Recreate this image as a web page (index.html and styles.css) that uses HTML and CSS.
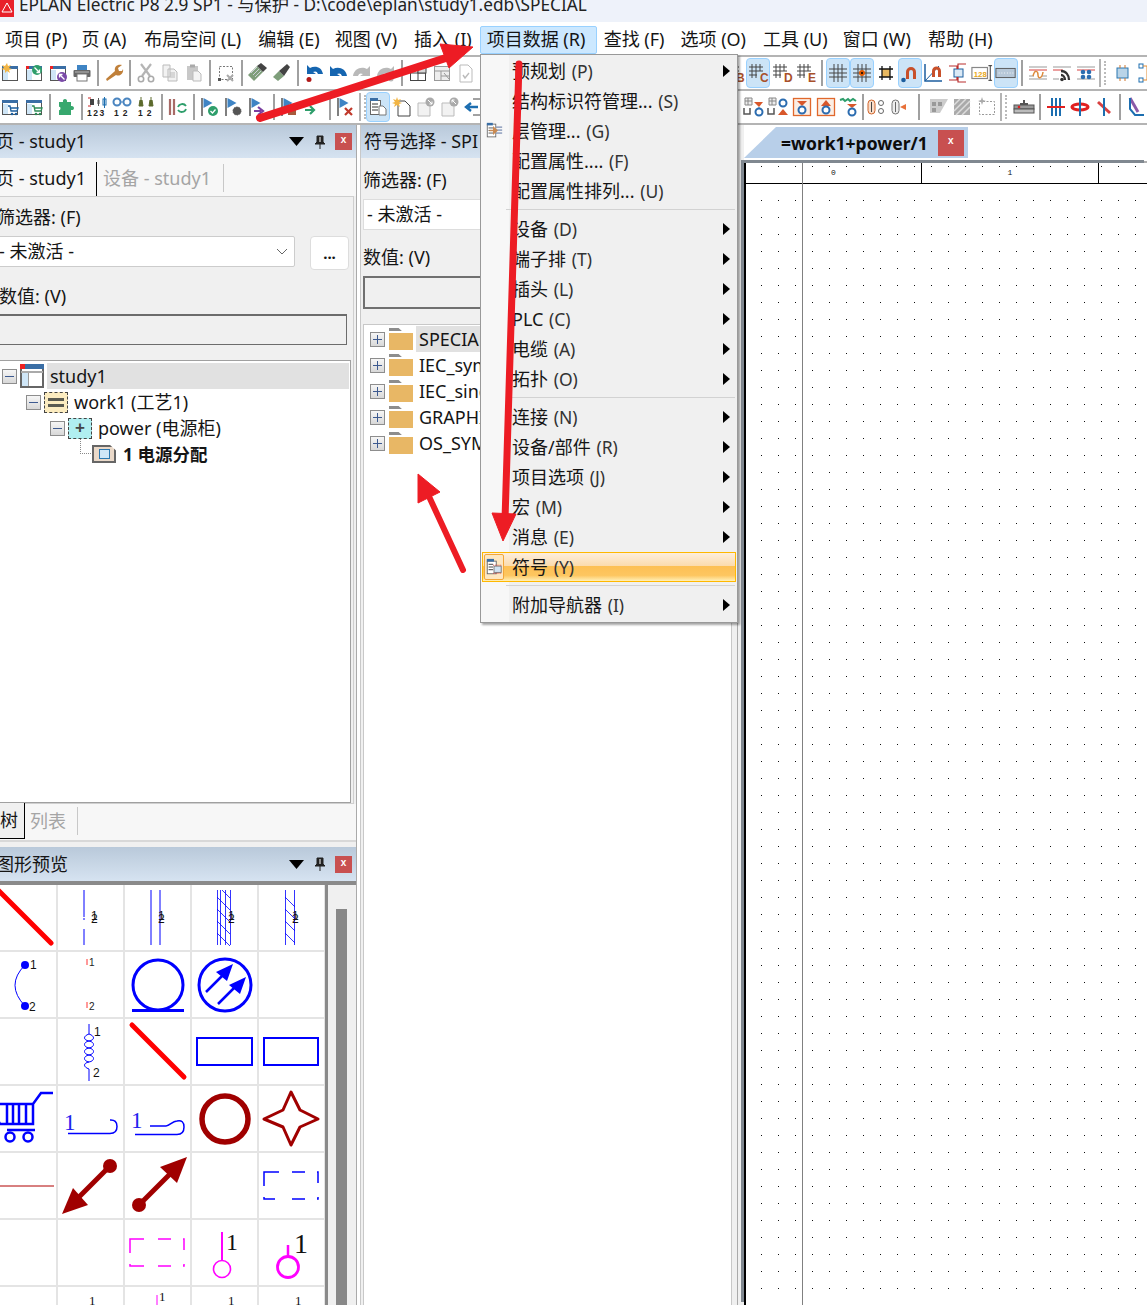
FILE: index.html
```html
<!DOCTYPE html>
<html lang="zh">
<head>
<meta charset="utf-8">
<title>EPLAN Electric P8</title>
<link rel="stylesheet" href="styles.css">
</head>
<body>
<svg class="defs" width="0" height="0" aria-hidden="true">
<defs>
<symbol id="win" viewBox="0 0 20 20"><rect x="2.500" y="3.500" width="15" height="14" fill="#fff" stroke="#555"/><rect x="2" y="3" width="16" height="3" fill="#3a6ea5"/><rect x="3" y="7" width="5" height="10" fill="#cfe6f7"/></symbol>
<symbol id="pj" viewBox="0 0 24 24"><rect x="1" y="1" width="22" height="22" fill="#fff" stroke="#666" stroke-width="2"/><rect x="0" y="0" width="24" height="5" fill="#3a6ea5"/><rect x="0" y="0" width="5" height="5" fill="#e22"/><path d="M1 8h22" stroke="#aaa" stroke-width="2"/><rect x="2" y="9" width="6" height="13" fill="#cfe6f7"/><path d="M8.500 9v13" stroke="#999"/></symbol>
<symbol id="n1" viewBox="0 0 20 20"><use href="#win"/><path d="M7 0l1 3 3-1-2 3 3 1-3 1 1 3-3-2-2 2 0-3-4-1 3-1-2-3 3 1z" fill="#f2b544"/></symbol>
<symbol id="n2" viewBox="0 0 20 20"><use href="#win"/><rect x="2" y="3" width="3" height="3" fill="#e22"/><circle cx="13" cy="7" r="5" fill="#2e9e6b"/><path d="M10.500 4.500l5 5m0-3v3h-3" stroke="#fff" fill="none" stroke-width="1.300"/></symbol>
<symbol id="n3" viewBox="0 0 20 20"><use href="#win"/><rect x="2" y="3" width="3" height="3" fill="#e22"/><circle cx="14" cy="14" r="5" fill="#7a4aa8"/><path d="M16.500 16.500l-5-5m0 3v-3h3" stroke="#fff" fill="none" stroke-width="1.300"/></symbol>
<symbol id="prt" viewBox="0 0 20 20"><rect x="5" y="2" width="10" height="6" fill="#3f84c4"/><rect x="1.500" y="7" width="17" height="7" rx="1" fill="#666"/><rect x="5" y="11" width="10" height="7" fill="#fff" stroke="#777"/><path d="M3 9h14" stroke="#bbb"/></symbol>
<symbol id="wr" viewBox="0 0 20 20"><path d="M3 18L2 16l9-8c-1-4 2-7 7-6l-4 3 1 3 3 0 1-2c1 4-3 8-7 6z" fill="#c0803a"/></symbol>
<symbol id="cut" viewBox="0 0 20 20"><path d="M5 1l9 12M15 1L6 13" stroke="#b5b5b5" stroke-width="2.200" fill="none"/><circle cx="5" cy="16" r="2.700" fill="none" stroke="#aaa" stroke-width="1.600"/><circle cx="15" cy="16" r="2.700" fill="none" stroke="#aaa" stroke-width="1.600"/></symbol>
<symbol id="cpy" viewBox="0 0 20 20"><path d="M3 2h7v12H3zM8 6h6l3 3v9H8z" fill="#f2f2f2" stroke="#bbb"/><path d="M10 10h5M10 12h5M10 14h5" stroke="#bbb"/></symbol>
<symbol id="pst" viewBox="0 0 20 20"><rect x="3" y="3" width="11" height="14" fill="#c8c8c8"/><rect x="6" y="1.500" width="5" height="3" fill="#aaa"/><path d="M9 8h5l3 3v7H9z" fill="#f4f4f4" stroke="#bbb"/></symbol>
<symbol id="sel" viewBox="0 0 20 20"><rect x="3.500" y="3.500" width="13" height="13" fill="none" stroke="#777" stroke-dasharray="2 1.500"/><rect x="2" y="15" width="3" height="3" fill="#555"/><path d="M11 12l6 6m0-6l-6 6" stroke="#aaa" stroke-width="2"/></symbol>
<symbol id="br1" viewBox="0 0 20 20"><path d="M0 12L9 3l6 6-9 9z" fill="#7e9e7a"/><path d="M9 3l4-3 6 5-4 4z" fill="#444"/><path d="M3 10l6-6M5 12l6-6M7 14l6-6" stroke="#dde" stroke-width=".8"/></symbol>
<symbol id="br2" viewBox="0 0 20 20"><path d="M1 14l6-6 5 5-6 5z" fill="#7e9e7a"/><path d="M7 8l8-7 3 3-6 9z" fill="#444"/></symbol>
<symbol id="ud" viewBox="0 0 20 20"><path d="M3 11V2l3 3c5-3 12-1 13 6h-5c-1-3-3-3-5-2l3 2z" fill="#1565b0"/><circle cx="5" cy="16.500" r="2.500" fill="#b01818"/></symbol>
<symbol id="un" viewBox="0 0 20 20"><path d="M2 13V3l3 3c5-3 13-1 14 7h-5c-1-3-3-3-5-2l3 2z" fill="#1565b0"/></symbol>
<symbol id="rd" viewBox="0 0 20 20"><path d="M18 13V3l-3 3C10 3 2 5 1 13h5c1-3 3-3 5-2l-3 2z" fill="#b9b9b9"/></symbol>
<symbol id="rd2" viewBox="0 0 20 20"><use href="#rd"/><circle cx="15" cy="16" r="2.500" fill="#b9b9b9"/><rect x="2" y="12" width="4" height="6" fill="#b9b9b9"/></symbol>
<symbol id="w1" viewBox="0 0 20 20"><rect x="2.500" y="3.500" width="15" height="14" fill="#fff" stroke="#444"/><path d="M2 10h16M10 3v15" stroke="#444"/><rect x="10" y="3" width="8" height="7" fill="#d8d8d8" stroke="#444"/></symbol>
<symbol id="w2" viewBox="0 0 20 20"><rect x="2.500" y="3.500" width="15" height="14" fill="#eee" stroke="#999"/><path d="M2 8h16M9 8v10M9 13h9M12 10l5 6" stroke="#999"/></symbol>
<symbol id="dc" viewBox="0 0 20 20"><path d="M4 2h8l4 4v13H4z" fill="#fff" stroke="#bbb"/><path d="M7 12l2 3 4-5" stroke="#bbb" fill="none" stroke-width="1.400"/></symbol>
<symbol id="gr" viewBox="0 0 20 20"><path d="M6 1v18M10 1v18M14 1v18M1 6h18M1 10h18M1 14h18" stroke="#444"/></symbol>
<symbol id="gb" viewBox="0 0 20 20"><path d="M4 1v14M8 1v14M12 1v7M1 4h14M1 8h14M1 12h8" stroke="#444"/></symbol>
<symbol id="gs" viewBox="0 0 20 20"><use href="#gr"/><circle cx="10" cy="10" r="3" fill="#e25a00"/><circle cx="10" cy="10" r="1" fill="#000"/></symbol>
<symbol id="sq" viewBox="0 0 20 20"><rect x="6" y="6" width="8" height="8" fill="#e8b860"/><path d="M6 3v14M14 3v14M3 6h14M3 14h14" stroke="#111" stroke-width="1.300"/></symbol>
<symbol id="mg" viewBox="0 0 20 20"><path d="M6 16V9a5 5 0 0 1 10 0v7h-3V9a2 2 0 0 0-4 0v7z" fill="#c8502a"/><circle cx="3.500" cy="17" r="2.300" fill="#1c5e9e"/></symbol>
<symbol id="mg2" viewBox="0 0 20 20"><path d="M1 1v17h17" fill="none" stroke="#1c5e9e" stroke-width="1.500"/><path d="M1 18L15 3" stroke="#1c5e9e"/><path d="M8 14V8a4.500 4.500 0 0 1 9 0v6h-3V8a1.500 1.500 0 0 0-3 0v6z" fill="#c8502a"/></symbol>
<symbol id="rl" viewBox="0 0 20 20"><rect x="6" y="6" width="9" height="8" fill="#dbe9f5" stroke="#1c5e9e"/><path d="M1 3h8v3M1 17h8v-3M10 6V1h8M10 14v5h8" stroke="#b92e2e" fill="none" stroke-width="1.200"/></symbol>
<symbol id="n128" viewBox="0 0 24 20"><rect x="1" y="4" width="17" height="12" fill="#fff" stroke="#888" stroke-width="1.300"/><text x="3" y="14" font-size="8.500" font-weight="700" fill="#e9a820" font-family="Liberation Sans">128</text><path d="M21 2v16M19 2h4M19 18h4" stroke="#222"/></symbol>
<symbol id="rlr" viewBox="0 0 24 20"><rect x="1" y="5" width="21" height="10" fill="#b7c8d8" stroke="#555"/><path d="M4 10h16" stroke="#fff" stroke-dasharray="1 2"/></symbol>
<symbol id="tl" viewBox="0 0 20 20"><path d="M1 4h18M1 16h18" stroke="#999"/><path d="M1 7h18" stroke="#d84040"/><path d="M1 13h5M14 13h5" stroke="#999"/><path d="M5 13c2-7 5-5 5-1s4 4 5-3" fill="none" stroke="#dd8a3c" stroke-width="1.500"/></symbol>
<symbol id="tw" viewBox="0 0 20 20"><path d="M1 4h18M1 16h6" stroke="#999"/><path d="M1 7h10" stroke="#d84040"/><path d="M9 8c5 0 8 4 8 9M9 12c2 0 4 2 4 5" fill="none" stroke="#333" stroke-width="2.300"/><circle cx="10" cy="16.500" r="1.800" fill="#333"/></symbol>
<symbol id="td" viewBox="0 0 20 20"><path d="M1 4h18M1 16h18" stroke="#999"/><path d="M1 7h18" stroke="#d84040"/><g fill="#2b6cb0"><circle cx="7" cy="9" r="2.300"/><circle cx="13" cy="9" r="2.300"/><circle cx="7" cy="14" r="2.300"/><circle cx="13" cy="14" r="2.300"/></g></symbol>
<symbol id="ch" viewBox="0 0 20 20"><rect x="4" y="5" width="11" height="10" fill="#b9d4e8" stroke="#2b77b0"/><path d="M7 2v3M12 2v3M7 15v3M12 15v3" stroke="#d0762d"/></symbol>
<symbol id="tr" viewBox="0 0 20 20"><rect x="2" y="1" width="4" height="4" fill="#fff" stroke="#1c6eb0"/><rect x="2" y="15" width="4" height="4" fill="#fff" stroke="#1c6eb0"/><rect x="13" y="7" width="5" height="5" fill="#cfe" stroke="#1c6eb0"/><path d="M6 3h4v14H6M10 9h3" fill="none" stroke="#e08a30"/></symbol>
<symbol id="wc1" viewBox="0 0 20 20"><use href="#win"/><path d="M8 9h2l1 5h6l1-3h-8" fill="#fff" stroke="#1d5f9e" stroke-width="1.300"/><circle cx="12" cy="17" r="1.300" fill="#1d5f9e"/><circle cx="16" cy="17" r="1.300" fill="#1d5f9e"/></symbol>
<symbol id="wc2" viewBox="0 0 20 20"><use href="#win"/><path d="M8 9h2l1 5h6l1-3h-8" fill="#fff" stroke="#2e8b57" stroke-width="1.300"/><circle cx="12" cy="17" r="1.300" fill="#2e8b57"/><circle cx="16" cy="17" r="1.300" fill="#2e8b57"/></symbol>
<symbol id="pz" viewBox="0 0 20 20"><path d="M3 5h4c-1-4 5-4 4 0h4v4c4-1 4 5 0 4v5H3v-5c2 1 2-4 0-3z" fill="#37a86e"/></symbol>
<symbol id="n123" viewBox="0 0 22 20"><rect x="3" y="2" width="4" height="6" fill="#444"/><path d="M1 1h3M1 9h3" stroke="#c22"/><path d="M10 4h3M10 6h3M11.500 1v8" stroke="#555"/><rect x="16" y="2" width="3" height="6" fill="#fff" stroke="#1c6eb0"/><path d="M17.500 0v11" stroke="#1c6eb0"/><text x="0" y="19" font-size="8.500" font-weight="700" letter-spacing="1.500" font-family="Liberation Sans" fill="#222">123</text></symbol>
<symbol id="n12b" viewBox="0 0 20 20"><circle cx="5" cy="5" r="3.500" fill="none" stroke="#4a85c0" stroke-width="2"/><circle cx="15" cy="5" r="3.500" fill="none" stroke="#4a85c0" stroke-width="2"/><path d="M8 5h4" stroke="#4a85c0"/><text x="2" y="19" font-size="8.500" font-weight="700" letter-spacing="4" font-family="Liberation Sans" fill="#222">12</text></symbol>
<symbol id="n12o" viewBox="0 0 20 20"><path d="M5 0v2M3 9l1-6h2l1 6zM15 0v2M13 9l1-6h2l1 6z" fill="#5d6a2c" stroke="#5d6a2c"/><text x="2" y="19" font-size="8.500" font-weight="700" letter-spacing="4" font-family="Liberation Sans" fill="#222">12</text></symbol>
<symbol id="brf" viewBox="0 0 20 20"><path d="M2 2v16M6 2v16" stroke="#a86a66" stroke-width="2.200"/><path d="M18 9a4.500 4.500 0 0 0-8 1M10 13a4.500 4.500 0 0 0 8-1" fill="none" stroke="#2e9e6b" stroke-width="1.800"/></symbol>
<symbol id="flag" viewBox="0 0 20 20"><path d="M2 1v18" stroke="#555" stroke-width="1.500"/><path d="M3.500 1l9 5-9 5z" fill="#3f84c4"/></symbol>
<symbol id="f1" viewBox="0 0 20 20"><use href="#flag"/><circle cx="13" cy="14" r="5" fill="#2e9e6b"/><path d="M10.500 14l2 2 3-3.500" stroke="#fff" fill="none" stroke-width="1.300"/></symbol>
<symbol id="f2" viewBox="0 0 20 20"><use href="#flag"/><circle cx="13" cy="14" r="4" fill="#555" stroke="#555" stroke-dasharray="1.500 1"/></symbol>
<symbol id="f3" viewBox="0 0 20 20"><use href="#flag"/><path d="M6 14h7M10 10l5 4-5 4" stroke="#7a3fa0" stroke-width="2.200" fill="none"/></symbol>
<symbol id="f4" viewBox="0 0 20 20"><use href="#flag"/><rect x="8" y="10" width="8" height="8" fill="#a85a3c"/></symbol>
<symbol id="f5" viewBox="0 0 20 20"><path d="M14 6l-9 0 9-5z" fill="#3f84c4"/><path d="M1 13h8M6 9l4 4-4 4" stroke="#2e9e6b" stroke-width="2.200" fill="none"/></symbol>
<symbol id="f6" viewBox="0 0 20 20"><use href="#flag"/><path d="M9 11l7 7m0-7l-7 7" stroke="#c0392b" stroke-width="2.200"/></symbol>
<symbol id="ds" viewBox="0 0 20 20"><rect x="2.500" y="3.500" width="10" height="14" fill="#fff" stroke="#666"/><rect x="2" y="1" width="8" height="3" fill="#3a6ea5"/><path d="M4 7h6M4 10h6M4 13h6" stroke="#333"/><path d="M11 9h4l3 3v6h-7z" fill="#fff" stroke="#777"/></symbol>
<symbol id="ds2" viewBox="0 0 20 20"><rect x="2.500" y="3.500" width="10" height="14" fill="#fff" stroke="#666"/><rect x="2" y="1" width="8" height="3" fill="#3a6ea5"/><path d="M4 7h5M4 10h5M4 13h5" stroke="#333"/><rect x="10" y="9" width="8" height="7" fill="#cfe2f2" stroke="#777"/><path d="M9 8h10M9 17h10" stroke="#d44" stroke-dasharray="1 1"/></symbol>
<symbol id="ds3" viewBox="0 0 20 20"><rect x="1.500" y="2.500" width="10" height="15" fill="#fff" stroke="#666"/><rect x="1" y="1" width="7" height="3" fill="#3a6ea5"/><path d="M3 7h6M3 10h3M3 13h6" stroke="#444"/><path d="M12 6h7M12 9.500h7M12 13h7" stroke="#3d5a90"/><path d="M4 10h8M9 6.500l4 3.500-4 3.500z" fill="#c98a52" stroke="#c98a52" stroke-width="1.500"/></symbol>
<symbol id="dstar" viewBox="0 0 20 20"><path d="M6 4h7l5 5v10H6z" fill="#fff" stroke="#444"/><path d="M5 0l1 3 3-1-2 3 3 1-3 1 1 3-3-2-3 2 1-3-3-1 3-1-2-3 3 1z" fill="#f2b544"/></symbol>
<symbol id="dg1" viewBox="0 0 20 20"><path d="M2 6h12v13H2z" fill="#f2f2f2" stroke="#bbb"/><circle cx="14" cy="5" r="4.500" fill="#aaa"/><path d="M12 3l4 4m0-2.500V7h-2.500" stroke="#fff" fill="none"/></symbol>
<symbol id="dg2" viewBox="0 0 20 20"><path d="M2 6h12v13H2z" fill="#f2f2f2" stroke="#bbb"/><circle cx="14" cy="5" r="4.500" fill="#aaa"/><path d="M16 7l-4-4m0 2.500V3h2.500" stroke="#fff" fill="none"/></symbol>
<symbol id="back" viewBox="0 0 20 20"><path d="M9 2h9v16H9" fill="#fff" stroke="#444"/><path d="M14 10H4M7 6l-5 4 5 4" stroke="#1c6eb0" stroke-width="2.400" fill="none"/></symbol>
<symbol id="pu1" viewBox="0 0 22 20"><path d="M2 1h7v7H2z" fill="#eee" stroke="#888"/><path d="M2 4h7M5 1v7" stroke="#888"/><path d="M11 5h9l-4 5z" fill="#d8572a"/><path d="M1 11v6h6v-6" fill="none" stroke="#555" stroke-width="1.500"/><circle cx="16" cy="15" r="3.500" fill="#fff" stroke="#2b6cb0" stroke-width="2"/><path d="M16 10v2" stroke="#2b6cb0"/></symbol>
<symbol id="pu2" viewBox="0 0 22 20"><path d="M2 1h7v7H2z" fill="#eee" stroke="#888"/><path d="M2 4h7M5 1v7" stroke="#888"/><path d="M1 11v6h6v-6" fill="none" stroke="#555" stroke-width="1.500"/><circle cx="16" cy="6" r="3.500" fill="#fff" stroke="#2b6cb0" stroke-width="2"/><path d="M11 18h10l-5-6z" fill="#d8572a"/></symbol>
<symbol id="pu3" viewBox="0 0 20 20"><rect x="1.500" y="1.500" width="17" height="17" fill="#fbeee4" stroke="#e0682c" stroke-width="1.300"/><path d="M5 4h10l-5 5z" fill="#d8572a"/><circle cx="10" cy="13" r="3.500" fill="#fff" stroke="#2b6cb0" stroke-width="2"/></symbol>
<symbol id="pu4" viewBox="0 0 20 20"><rect x="1.500" y="1.500" width="17" height="17" fill="#fbeee4" stroke="#e0682c" stroke-width="1.300"/><path d="M5 9h10l-5-6z" fill="#d8572a"/><circle cx="10" cy="13" r="3.500" fill="#fff" stroke="#2b6cb0" stroke-width="2"/></symbol>
<symbol id="pu5" viewBox="0 0 22 20"><path d="M1 3l3-1 2 2 3-2 2 2 3-2 3 2" fill="none" stroke="#2e9e6b" stroke-width="2"/><path d="M8 7h10l-5 4z" fill="#d8572a"/><circle cx="13" cy="15" r="3.500" fill="#fff" stroke="#2b6cb0" stroke-width="2"/></symbol>
<symbol id="cy1" viewBox="0 0 22 20"><rect x="3" y="3" width="7" height="14" rx="3.500" fill="#f9ddc9" stroke="#d0642a"/><path d="M6.500 5v10" stroke="#444"/><circle cx="16" cy="6" r="2.500" fill="none" stroke="#666"/><circle cx="16" cy="14" r="2.500" fill="none" stroke="#666"/></symbol>
<symbol id="cy2" viewBox="0 0 22 20"><rect x="3" y="3" width="7" height="14" rx="3.500" fill="#eee" stroke="#777"/><path d="M6.500 5v10" stroke="#666"/><path d="M11 10l6-3v6z" fill="#e8713a"/></symbol>
<symbol id="gy1" viewBox="0 0 22 20"><path d="M2 2h18l-8 14H2z" fill="#ccc"/><path d="M4 5h4v4H4zM10 5h4v4h-4zM4 11h4v4H4z" fill="#999"/></symbol>
<symbol id="gy2" viewBox="0 0 22 20"><rect x="2" y="2" width="16" height="16" fill="#aaa"/><path d="M2 8l6-6M2 14L14 2M4 18L18 4M10 18l8-8" stroke="#ddd" stroke-width="1.500"/></symbol>
<symbol id="gy3" viewBox="0 0 22 20"><rect x="3.500" y="4.500" width="15" height="13" fill="none" stroke="#999" stroke-dasharray="2 1.500"/><path d="M6 0l1 3 3 1-3 1-1 3-1-3-3-1 3-1z" fill="#aaa"/></symbol>
<symbol id="st" viewBox="0 0 22 20"><path d="M7 7h8M11 3v4" stroke="#555" stroke-width="2"/><rect x="1" y="8" width="20" height="4" fill="#999" stroke="#555"/><rect x="1" y="12" width="20" height="4" fill="#bbb" stroke="#555"/><circle cx="6" cy="10" r="1.300" fill="#d22"/></symbol>
<symbol id="cb1" viewBox="0 0 20 20"><path d="M6 1v18M10 1v18M14 1v18" stroke="#1c6eb0" stroke-width="2"/><path d="M1 10h18" stroke="#e02020" stroke-width="2"/></symbol>
<symbol id="cb2" viewBox="0 0 20 20"><ellipse cx="10" cy="10" rx="8" ry="3" fill="none" stroke="#e02020" stroke-width="3"/><path d="M10 1v18" stroke="#1c6eb0" stroke-width="2"/></symbol>
<symbol id="cb3" viewBox="0 0 20 20"><path d="M4 5l12 11" stroke="#d84040" stroke-width="3"/><path d="M10 1v18" stroke="#1c6eb0" stroke-width="2"/></symbol>
<symbol id="cb4" viewBox="0 0 20 20"><path d="M4 1l8 14" stroke="#8a5aa8" stroke-width="3"/><path d="M4 1v11l5 6h9" fill="none" stroke="#1c6eb0" stroke-width="2"/></symbol>
<symbol id="dn" viewBox="0 0 15 9"><path d="M0 0h15L7.500 9z" fill="#000"/></symbol>
<symbol id="pin" viewBox="0 0 12 14"><path d="M3 1h6v6l2 2H1l2-2zM6 9v5" fill="#222" stroke="#222"/><path d="M6 2v5" stroke="#fff"/></symbol>
</defs>
</svg>

<div class="app">
<header class="title"><span class="logo"><svg viewBox="0 0 14 16" width="14" height="16"><path d="M7 4l5 9H2z" fill="none" stroke="#fff"/></svg></span><span class="title-text">EPLAN Electric P8 2.9 SP1 - 与保护 - D:\code\eplan\study1.edb\SPECIAL</span></header>

<nav class="menubar">
<span class="mi m1">项目 (P)</span><span class="mi m2">页 (A)</span><span class="mi m3">布局空间 (L)</span><span class="mi m4">编辑 (E)</span><span class="mi m5">视图 (V)</span><span class="mi m6">插入 (I)</span><span class="mi mactive">项目数据 (R)</span><span class="mi m8">查找 (F)</span><span class="mi m9">选项 (O)</span><span class="mi m10">工具 (U)</span><span class="mi m11">窗口 (W)</span><span class="mi m12">帮助 (H)</span>
</nav>

<div class="tb tb1">
<i class="ti"><svg><use href="#n1"/></svg></i><i class="ti"><svg><use href="#n2"/></svg></i><i class="ti"><svg><use href="#n3"/></svg></i><i class="ti"><svg><use href="#prt"/></svg></i><b class="sep"></b>
<i class="ti"><svg><use href="#wr"/></svg></i><b class="sep"></b>
<i class="ti"><svg><use href="#cut"/></svg></i><i class="ti"><svg><use href="#cpy"/></svg></i><i class="ti"><svg><use href="#pst"/></svg></i><b class="sep"></b>
<i class="ti"><svg><use href="#sel"/></svg></i><b class="sep"></b>
<i class="ti"><svg><use href="#br1"/></svg></i><i class="ti"><svg><use href="#br2"/></svg></i><b class="sep"></b>
<i class="ti"><svg><use href="#ud"/></svg></i><i class="ti"><svg><use href="#un"/></svg></i><i class="ti"><svg><use href="#rd"/></svg></i><i class="ti"><svg><use href="#rd2"/></svg></i><b class="sep"></b>
<i class="ti"><svg><use href="#w1"/></svg></i><i class="ti"><svg><use href="#w2"/></svg></i><i class="ti"><svg><use href="#dc"/></svg></i>
<div class="tb-right r1">
<i class="ti"><svg><use href="#gb"/><text x="12" y="19" class="gl">B</text></svg></i><i class="ti on"><svg><use href="#gb"/><text x="12" y="19" class="gl">C</text></svg></i><i class="ti"><svg><use href="#gb"/><text x="12" y="19" class="gl">D</text></svg></i><i class="ti"><svg><use href="#gb"/><text x="12" y="19" class="gl">E</text></svg></i><b class="sep"></b>
<i class="ti on"><svg><use href="#gr"/></svg></i><i class="ti on"><svg><use href="#gs"/></svg></i><i class="ti"><svg><use href="#sq"/></svg></i><i class="ti on"><svg><use href="#mg"/></svg></i><i class="ti"><svg><use href="#mg2"/></svg></i><i class="ti"><svg><use href="#rl"/></svg></i><i class="ti"><svg class="wide"><use href="#n128"/></svg></i><i class="ti on"><svg class="wide"><use href="#rlr"/></svg></i><b class="sep"></b>
<i class="ti"><svg><use href="#tl"/></svg></i><i class="ti"><svg><use href="#tw"/></svg></i><i class="ti"><svg><use href="#td"/></svg></i><b class="sep dots dw"></b>
<i class="ti"><svg><use href="#ch"/></svg></i><i class="ti"><svg><use href="#tr"/></svg></i>
</div>
</div>

<div class="tb tb2">
<i class="ti"><svg><use href="#wc1"/></svg></i><i class="ti"><svg><use href="#wc2"/></svg></i><b class="sep"></b>
<i class="ti"><svg><use href="#pz"/></svg></i><b class="sep"></b>
<i class="ti"><svg class="wide"><use href="#n123"/></svg></i><i class="ti"><svg><use href="#n12b"/></svg></i><i class="ti"><svg><use href="#n12o"/></svg></i><b class="sep"></b>
<i class="ti"><svg><use href="#brf"/></svg></i><b class="sep"></b>
<i class="ti"><svg><use href="#f1"/></svg></i><i class="ti"><svg><use href="#f2"/></svg></i><i class="ti"><svg><use href="#f3"/></svg></i><b class="sep"></b>
<i class="ti"><svg><use href="#f4"/></svg></i><i class="ti"><svg><use href="#f5"/></svg></i><b class="sep"></b>
<i class="ti"><svg><use href="#f6"/></svg></i><b class="sep dots"></b>
<i class="ti on"><svg><use href="#ds"/></svg></i><i class="ti"><svg><use href="#dstar"/></svg></i><i class="ti"><svg><use href="#dg1"/></svg></i><i class="ti"><svg><use href="#dg2"/></svg></i><i class="ti"><svg><use href="#back"/></svg></i>
<div class="tb-right r2">
<i class="ti"><svg class="wide"><use href="#pu1"/></svg></i><i class="ti"><svg class="wide"><use href="#pu2"/></svg></i><i class="ti"><svg><use href="#pu3"/></svg></i><i class="ti"><svg><use href="#pu4"/></svg></i><i class="ti"><svg class="wide"><use href="#pu5"/></svg></i><b class="sep sn"></b>
<i class="ti"><svg class="wide"><use href="#cy1"/></svg></i><i class="ti"><svg class="wide"><use href="#cy2"/></svg></i><b class="sep sw"></b>
<i class="ti"><svg class="wide"><use href="#gy1"/></svg></i><i class="ti"><svg class="wide"><use href="#gy2"/></svg></i><i class="ti"><svg class="wide"><use href="#gy3"/></svg></i><b class="sep dots dw"></b>
<i class="ti"><svg class="wide"><use href="#st"/></svg></i><b class="sep"></b>
<i class="ti"><svg><use href="#cb1"/></svg></i><i class="ti"><svg><use href="#cb2"/></svg></i><i class="ti"><svg><use href="#cb3"/></svg></i><b class="sep"></b>
<i class="ti"><svg><use href="#cb4"/></svg></i>
</div>
</div>

<main class="work">
<section class="left">
  <div class="ph"><span class="ph-t">页 - study1</span><span class="ph-c"><svg class="c-dn"><use href="#dn"/></svg><svg class="c-pin"><use href="#pin"/></svg><span class="c-x">x</span></span></div>
  <div class="tabs">
    <span class="tab act">页 - study1</span><span class="tab dim">设备 - study1</span>
  </div>
  <div class="lbody">
    <div class="lbl l-f">筛选器: (F)</div>
    <div class="frow">
      <div class="sel">- 未激活 -<svg class="chev" viewBox="0 0 12 8" width="12" height="8"><path d="M1 1l5 5 5-5" fill="none" stroke="#666"/></svg></div>
      <div class="dots-btn">...</div>
    </div>
    <div class="lbl l-v">数值: (V)</div>
    <div class="val"></div>
    <div class="tree">
      <div class="row r0"><span class="exp"></span><svg class="node"><use href="#pj"/></svg><span class="t seltext">study1</span></div>
      <div class="row r1x"><span class="exp"></span><span class="node nwork"><b></b><b></b></span><span class="t">work1 (工艺1)</span></div>
      <div class="row r2x"><span class="exp"></span><span class="node npower">+</span><span class="t">power (电源柜)</span></div>
      <div class="row r3x"><span class="stub"></span><span class="node npage"><em></em></span><span class="t bold">1 电源分配</span></div>
    </div>
  </div>
  <div class="btabs"><span class="btab act">树</span><span class="btab dim">列表</span></div>
  <div class="ph ph2"><span class="ph-t">图形预览</span><span class="ph-c"><svg class="c-dn"><use href="#dn"/></svg><svg class="c-pin"><use href="#pin"/></svg><span class="c-x">x</span></span></div>
  <div class="preview">
    <div class="grid">
      <svg class="cell" viewBox="0 0 65 65"><path d="M4 2L60 58" stroke="#f00" stroke-width="5" stroke-linecap="round"/></svg>
      <svg class="cell" viewBox="0 0 65 65"><path d="M26 5v27M26 33v2M26 44v16" stroke="#00f"/><text x="33" y="35" class="s11">1</text><text x="33" y="38" class="s11">2</text></svg>
      <svg class="cell" viewBox="0 0 65 65"><path d="M26 5v55M35 5v55" stroke="#00f"/><text x="33" y="35" class="s11">1</text><text x="33" y="38" class="s11">2</text></svg>
      <svg class="cell" viewBox="0 0 65 65"><path d="M25.500 5v55M28.500 5v55M33.500 5v55M38.500 5v55M25 12l13 13M25 24l13 13M25 36l13 13M25 48l13 13M30 5l8 8" stroke="#00f" stroke-width=".8"/><text x="36" y="35" class="s11">1</text><text x="36" y="38" class="s11">2</text></svg>
      <svg class="cell" viewBox="0 0 65 65"><path d="M26.500 5v55M35.500 5v55M26 12l10 10M26 24l10 10M26 36l10 10M26 48l10 10" stroke="#00f" stroke-width=".8"/><text x="33" y="35" class="s11">1</text><text x="33" y="38" class="s11">2</text></svg>

      <svg class="cell" viewBox="0 0 65 65"><path d="M34 13Q14 33 34 54" fill="none" stroke="#00f"/><circle cx="34" cy="13" r="4" fill="#00f"/><circle cx="34" cy="54" r="4" fill="#00f"/><text x="39" y="17" class="s11">1</text><text x="38" y="59" class="s11">2</text></svg>
      <svg class="cell" viewBox="0 0 65 65"><path d="M29 7v6M29 50v6" stroke="#f33"/><text x="31" y="14" class="s10">1</text><text x="31" y="58" class="s10">2</text></svg>
      <svg class="cell" viewBox="0 0 65 65"><circle cx="33" cy="33" r="25" fill="none" stroke="#00f" stroke-width="3"/><path d="M7 58.500h52" stroke="#00f" stroke-width="3"/></svg>
      <svg class="cell" viewBox="0 0 65 65"><circle cx="33" cy="33" r="26" fill="none" stroke="#00f" stroke-width="3"/><path d="M14 40L32 22M26 52L44 34" stroke="#00f" stroke-width="2.500"/><path d="M41 12L35 29 24 20zM54 25L48 42 37 33z" fill="#00f"/></svg>
      <svg class="cell" viewBox="0 0 65 65"></svg>

      <svg class="cell" viewBox="0 0 65 65"></svg>
      <svg class="cell" viewBox="0 0 65 65"><path d="M31 5v10c-6 2-6 6 0 7 6 1 6 6 0 7 6 1 6 6 0 7 6 1 6 6 0 7-6 1-6 5 0 7v12" fill="none" stroke="#00f"/><path d="M31 15c6 2 6 6 0 7-6 1-6 6 0 7-6 1-6 6 0 7-6 1-6 6 0 7" fill="none" stroke="#00f"/><text x="36" y="17" class="s11">1</text><text x="35" y="58" class="s11">2</text></svg>
      <svg class="cell" viewBox="0 0 65 65"><path d="M7 6L59 58" stroke="#f00" stroke-width="5" stroke-linecap="round"/></svg>
      <svg class="cell" viewBox="0 0 65 65"><rect x="5" y="19" width="55" height="27" fill="none" stroke="#00f" stroke-width="2"/></svg>
      <svg class="cell" viewBox="0 0 65 65"><rect x="5" y="19" width="54" height="27" fill="none" stroke="#00f" stroke-width="2"/></svg>

      <svg class="cell" viewBox="0 0 65 65"><path d="M2 18h40v20H9L5 30M16 18v20M22 18v20M28 18v20M35 18v20M42 18l8-11h12M16 44h28" fill="none" stroke="#00f" stroke-width="2.500"/><circle cx="19" cy="51" r="4.500" fill="none" stroke="#00f" stroke-width="2.500"/><circle cx="37" cy="51" r="4.500" fill="none" stroke="#00f" stroke-width="2.500"/></svg>
      <svg class="cell" viewBox="0 0 65 65"><text x="6" y="44" class="sb">1</text><path d="M10 47.500H52Q59 47.500 59 40.500T52 34" fill="none" stroke="#00f" stroke-width="1.500"/></svg>
      <svg class="cell" viewBox="0 0 65 65"><text x="6" y="42" class="sb">1</text><path d="M10 48.500H52Q59 48.500 59 41T52 35C47 35 45 40 41 40H25" fill="none" stroke="#00f" stroke-width="1.500"/></svg>
      <svg class="cell" viewBox="0 0 65 65"><circle cx="33" cy="33" r="23" fill="none" stroke="#a00000" stroke-width="5.500"/></svg>
      <svg class="cell" viewBox="0 0 65 65"><path d="M32 6L41 24 59 33 41 41 32 59 24 41 5 33 24 24z" fill="none" stroke="#a00000" stroke-width="3" stroke-linejoin="round"/></svg>

      <svg class="cell" viewBox="0 0 65 65"><path d="M0 33h63" stroke="#b00000"/></svg>
      <svg class="cell" viewBox="0 0 65 65"><circle cx="52" cy="13" r="7" fill="#a00000"/><path d="M52 13L20 45" stroke="#a00000" stroke-width="5"/><path d="M4 61L15 35 30 52z" fill="#a00000"/></svg>
      <svg class="cell" viewBox="0 0 65 65"><circle cx="14" cy="52" r="7" fill="#a00000"/><path d="M14 52L45 21" stroke="#a00000" stroke-width="5"/><path d="M62 4L35 14 52 30z" fill="#a00000"/></svg>
      <svg class="cell" viewBox="0 0 65 65"></svg>
      <svg class="cell" viewBox="0 0 65 65"><path d="M20 19H5V33M33 19H46M58 19h1V30M5 44v2H16M33 46H46M58 46h1V44" fill="none" stroke="#00f" stroke-width="1.500"/></svg>

      <svg class="cell" viewBox="0 0 65 65"></svg>
      <svg class="cell" viewBox="0 0 65 65"></svg>
      <svg class="cell" viewBox="0 0 65 65"><path d="M19 19H5V33M33 19H46M58 19h1V30M5 44v2H19M33 46H46M58 46h1V44" fill="none" stroke="#f0f" stroke-width="1.500"/></svg>
      <svg class="cell" viewBox="0 0 65 65"><path d="M30 12v28" stroke="#f0f" stroke-width="2"/><circle cx="30" cy="49" r="8.500" fill="none" stroke="#f0f" stroke-width="1.600"/><text x="34" y="30" class="s24">1</text></svg>
      <svg class="cell" viewBox="0 0 65 65"><path d="M29 25v11" stroke="#f0f" stroke-width="2.500"/><circle cx="29" cy="47" r="10.500" fill="none" stroke="#f0f" stroke-width="2.800"/><text x="35" y="33" class="s27">1</text></svg>

      <svg class="cell" viewBox="0 0 65 65"></svg>
      <svg class="cell" viewBox="0 0 65 65"><text x="31" y="18" class="s13">1</text></svg>
      <svg class="cell" viewBox="0 0 65 65"><path d="M32 8v10" stroke="#f0f"/><text x="34" y="14" class="s13">1</text></svg>
      <svg class="cell" viewBox="0 0 65 65"><text x="36" y="18" class="s13">1</text></svg>
      <svg class="cell" viewBox="0 0 65 65"><text x="36" y="18" class="s13">1</text></svg>
    </div>
    <div class="sb-wrap"><div class="thumb"></div></div>
  </div>
</section>

<section class="mid">
  <div class="ph mph"><span class="ph-t">符号选择 - SPI</span></div>
  <div class="mbody">
    <div class="lbl m-f">筛选器: (F)</div>
    <div class="msel">- 未激活 -</div>
    <div class="lbl m-v">数值: (V)</div>
    <div class="mval"></div>
    <div class="mtree">
      <div class="mrow"><span class="exp plus"></span><span class="fold"></span><span class="t mseltext">SPECIAL</span></div>
      <div class="mrow"><span class="exp plus"></span><span class="fold"></span><span class="t">IEC_symbol</span></div>
      <div class="mrow"><span class="exp plus"></span><span class="fold"></span><span class="t">IEC_single</span></div>
      <div class="mrow"><span class="exp plus"></span><span class="fold"></span><span class="t">GRAPHIC</span></div>
      <div class="mrow"><span class="exp plus"></span><span class="fold"></span><span class="t">OS_SYM</span></div>
    </div>
  </div>
</section>

<section class="right">
  <div class="tabstrip"><div class="doc-tab"><span class="doc-name">=work1+power/1</span><span class="doc-x">x</span></div></div>
  <div class="canvas">
    <div class="ruler"><span class="z z0">0</span><span class="z z1">1</span></div>
    <div class="vline"></div>
  </div>
</section>
</main>

<div class="menu">
  <div class="mn"><span>预规划 <small>(P)</small></span><u></u></div>
  <div class="mn"><span>结构标识符管理... <small>(S)</small></span></div>
  <div class="mn"><svg class="mic"><use href="#ds3"/></svg><span>层管理... <small>(G)</small></span></div>
  <div class="mn"><span>配置属性.... <small>(F)</small></span></div>
  <div class="mn"><span>配置属性排列... <small>(U)</small></span></div>
  <div class="msep"></div>
  <div class="mn"><span>设备 <small>(D)</small></span><u></u></div>
  <div class="mn"><span>端子排 <small>(T)</small></span><u></u></div>
  <div class="mn"><span>插头 <small>(L)</small></span><u></u></div>
  <div class="mn"><span>PLC <small>(C)</small></span><u></u></div>
  <div class="mn"><span>电缆 <small>(A)</small></span><u></u></div>
  <div class="mn"><span>拓扑 <small>(O)</small></span><u></u></div>
  <div class="msep"></div>
  <div class="mn"><span>连接 <small>(N)</small></span><u></u></div>
  <div class="mn"><span>设备/部件 <small>(R)</small></span><u></u></div>
  <div class="mn"><span>项目选项 <small>(J)</small></span><u></u></div>
  <div class="mn"><span>宏 <small>(M)</small></span><u></u></div>
  <div class="mn"><span>消息 <small>(E)</small></span><u></u></div>
  <div class="mn hot"><i class="hic"><svg><use href="#ds2"/></svg></i><span>符号 <small>(Y)</small></span></div>
  <div class="msep"></div>
  <div class="mn"><span>附加导航器 <small>(I)</small></span><u></u></div>
</div>

<svg class="arrows" viewBox="0 0 1147 1305" width="1147" height="1305">
  <g fill="#ed1c24" stroke="#ed1c24">
    <path d="M260 118L452 56" stroke-width="8" stroke-linecap="round" fill="none"/>
    <path d="M473 47L440 44 449 68z" stroke-width="1"/>
    <path d="M519 64L505 520" stroke-width="7" stroke-linecap="round" fill="none"/>
    <path d="M503 541L492 513 516 514z" stroke-width="1"/>
    <path d="M463 570L426 490" stroke-width="6" stroke-linecap="round" fill="none"/>
    <path d="M418 474L440 492 418 503z" stroke-width="1"/>
  </g>
</svg>
</div>
</body>
</html>
```

FILE: styles.css
```css
* { box-sizing: border-box; }
html, body { margin: 0; padding: 0; }
body { width: 1147px; height: 1305px; overflow: hidden; background: #fff; color: #151515;
  font-family: "Noto Sans", "Noto Sans CJK SC", sans-serif; font-size: 18px; line-height: 26px; }
.defs { position: absolute; }
.app { position: relative; width: 1147px; height: 1305px; overflow: hidden; }

.title { height: 22px; background: #eef2fa; display: flex; overflow: hidden; }
.logo { width: 14px; height: 22px; margin-top: -5px; background: #e8202a; flex: none; display: block; padding-top: 4px; }
.logo svg { display: block; }
.title-text { margin: -8px 0 0 5px; font-size: 17.250px; white-space: nowrap; color: #222; height: 26px; }

.menubar { height: 33px; background: #fff; display: flex; align-items: center; white-space: nowrap; }
.mi { display: block; height: 28px; line-height: 27px; padding: 0 7px; flex: none; font-size: 18px; margin-top: 2px; }
.m1 { margin-left: -2px; }
.m3 { margin-left: 4px; }
.m4 { margin-left: 3px; }
.m5 { margin-left: 1px; }
.m6 { margin-left: 3px; }
.m8 { margin-left: 0; }
.m9 { margin-left: 2px; }
.m10 { margin-left: 3px; }
.m11 { margin-left: 1px; }
.m12 { margin-left: 3px; }
.mactive { background: #cce8ff; border: 1px solid #99d1ff; border-radius: 2px; line-height: 25px; padding: 0 6px; width: 117px; margin-left: 1px; }

.tb { height: 34px; display: flex; align-items: center; background: #fff; border-top: 2px solid #b4b4b4; white-space: nowrap; position: relative; margin-left: -2px; width: 1170px; }
.ti { width: 24px; height: 30px; flex: none; display: flex; align-items: center; justify-content: center; border: 1px solid transparent; border-radius: 4px; font-style: normal; }
.ti svg { width: 20px; height: 20px; display: block; overflow: visible; }
.ti svg.wide { width: 22px; }
.ti.on { background: #cce4f7; border-color: #99d1ff; }
.sep { display: block; width: 8px; height: 28px; flex: none; position: relative; }
.sep::after { content: ""; position: absolute; left: 3px; top: 1px; bottom: 1px; width: 2px; background: #a0a0a0; }
.sep.dots::after { left: 1px; top: 0; bottom: 0; width: 2px; background: #b4b4b4; }
.sep.dots::before { content: ""; position: absolute; left: 6px; top: 2px; bottom: 2px; border-left: 2px dotted #bbb; }
.sep.dw { width: 13px; }
.sep.sn { width: 2px; }
.sep.sw { width: 15px; }
.sep.sw::after { left: 6px; }
.sep.sn::after { left: 0; }
.tb-right { display: flex; align-items: center; flex: none; }
.r1 { margin-left: 244px; }
.r2 { margin-left: 256px; }
.gl { font: 700 12px "Liberation Sans", sans-serif; fill: #a8502a; }

.work { display: flex; height: 1182px; border-top: 2px solid #b4b4b4; }
.left { width: 357px; flex: none; background: #f0f0f0; border-right: 1px solid #aaa; overflow: hidden; }
.ph { height: 33px; display: flex; align-items: center; justify-content: space-between; background: linear-gradient(#b9c9da, #d6e3f1); }
.ph-t { margin-left: -4px; padding-bottom: 1px; white-space: nowrap; }
.ph-c { display: flex; align-items: center; margin-right: 4px; }
.c-dn { width: 15px; height: 9px; margin-right: 10px; overflow: visible; }
.c-pin { width: 12px; height: 14px; margin-right: 9px; }
.c-x { width: 17px; height: 17px; background: #c85050; color: #fff; font: 700 10px/16px "Liberation Mono", monospace; text-align: center; }

.tabs { height: 38px; background: #f7f7f7; display: flex; padding-top: 4px; }
.tab { display: block; padding: 0 10px 0 0; height: 34px; line-height: 33px; white-space: nowrap; }
.tab.act { margin-left: -4px; width: 101px; border-right: 1px solid #000; }
.tab.dim { padding-left: 6px; width: 127px; color: #a5a5a5; border-right: 1px solid #c8c8c8; height: 28px; line-height: 28px; margin-top: 2px; }

.lbody { height: 608px; border: 1px solid #cfcfcf; border-left: 0; width: 354px; padding-top: 7px; background: #f0f0f0; }
.lbl { height: 26px; white-space: nowrap; }
.l-f { margin-left: -3px; }
.frow { display: flex; margin-top: 6px; height: 34px; }
.sel { height: 31px; background: #fff; border: 1px solid #ccc; border-radius: 2px; margin-left: -2px; width: 297px; line-height: 29px; position: relative; white-space: nowrap; }
.chev { position: absolute; right: 6px; top: 11px; }
.dots-btn { width: 39px; height: 34px; margin-left: 15px; background: #fff; border: 1px solid #ddd; border-radius: 4px; text-align: center; line-height: 32px; font-size: 15px; font-weight: 700; }
.l-v { margin: 13px 0 0 -1px; }
.val { width: 347px; height: 31px; margin-top: 5px; background: #f0f0f0; border: 1px solid #6c6c6c; border-width: 2px 1px 1px 0; }
.tree { width: 351px; height: 443px; margin-top: 15px; background: #fff; border: 1px solid #a0a0a0; border-left: 0; padding-top: 2px; }
.row { height: 26px; display: flex; align-items: center; position: relative; white-space: nowrap; }
.r0 { padding-left: 2px; }
.r1x { padding-left: 26px; }
.r2x { padding-left: 50px; }
.r3x { padding-left: 92px; }
.exp { width: 15px; height: 15px; border: 1px solid #8d8d8d; background: linear-gradient(#f6f6f6, #d8d8d8); position: relative; display: block; flex: none; }
.exp::before { content: ""; position: absolute; left: 2px; right: 2px; top: 6px; height: 1px; background: #3d5a90; }
.exp.plus::after { content: ""; position: absolute; top: 2px; bottom: 2px; left: 6px; width: 1px; background: #3d5a90; }
.node { width: 24px; height: 24px; flex: none; display: block; margin-left: 3px; }
.nwork { width: 24px; height: 21px; background: #fcecc0; border: 1px dashed #444; display: flex; flex-direction: column; justify-content: center; gap: 3px; padding: 0 3px; }
.nwork b { display: block; height: 3px; background: #5a5a50; }
.npower { width: 24px; height: 21px; background: #b0eef0; border: 1px dashed #444; text-align: center; font: 700 17px/18px "Liberation Sans", sans-serif; color: #444; }
.npage { height: 18px; width: 24px; margin-left: 0; background: #ead9c9; border: 2px solid #666; padding: 2px 5px; clip-path: polygon(0 0, 75% 0, 100% 30%, 100% 100%, 0 100%); }
.npage em { display: block; width: 11px; height: 10px; background: #cfe6f7; border: 1px solid #2b77b0; }
.t { margin-left: 6px; }
.seltext { flex: 1; background: #e1e1e1; margin-left: 3px; padding-left: 3px; height: 26px; margin-right: 1px; }
.bold { font-weight: 700; font-size: 17.500px; margin-left: 7px; }
.stub { position: absolute; left: 80px; top: -2px; width: 11px; height: 15px; border-left: 1px dotted #888; border-bottom: 1px dotted #888; }

.btabs { height: 38px; display: flex; background: #f7f7f7; width: 100%; border-bottom: 2px solid #d8d8d8; }
.btab { display: block; height: 34px; line-height: 34px; white-space: nowrap; }
.btab.act { width: 26px; margin-left: -1px; padding-left: 1px; border: 1px solid #000; border-width: 0 1px 1px 0; background: #f0f0f0; height: 36px; margin-top: -1px; }
.btab.dim { width: 53px; padding-left: 5px; color: #a5a5a5; border-right: 1px solid #c8c8c8; height: 28px; line-height: 28px; margin-top: 3px; }

.ph2 { margin-top: 5px; height: 34px; }
.preview { display: flex; height: 424px; border-top: 4px solid #8a8a8a; background: #f0f0f0; }
.grid { margin-left: -9px; width: 334px; display: grid; grid-template-columns: repeat(5, 65px); grid-auto-rows: 65px; gap: 2px; background: #e4e4e4; flex: none; align-content: start; }
.cell { width: 65px; height: 65px; background: #fff; display: block; overflow: hidden; }
.s10 { font: 10px "Liberation Sans", sans-serif; fill: #222; }
.s11 { font: 12px "Liberation Sans", sans-serif; fill: #111; }
.s13 { font: 13px "Liberation Serif", serif; fill: #111; }
.sb { font: 23px "Liberation Serif", serif; fill: #2222ee; }
.s24 { font: 24px "Liberation Serif", serif; fill: #111; }
.s27 { font: 28px "Liberation Serif", serif; fill: #111; }
.sb-wrap { width: 31px; border-left: 3px solid #8a8a8a; padding: 24px 0 0 8px; flex: none; }
.thumb { width: 11px; height: 400px; background: #888; }

.mid { width: 378px; flex: none; margin-left: 3px; background: #f0f0f0; border-left: 1px solid #c8c8c8; border-right: 1px solid #aaa; overflow: hidden; }
.mph { justify-content: flex-start; }
.mph .ph-t { margin-left: 3px; }
.mbody { padding: 9px 0 0 2px; }
.msel { margin-top: 6px; width: 367px; height: 31px; background: #fff; border: 1px solid #ddd; line-height: 29px; padding-left: 3px; }
.m-v { margin-top: 14px; }
.mval { margin-top: 6px; width: 367px; height: 33px; border: 1px solid #707070; border-width: 2px 0 2px 2px; }
.mtree { margin-top: 15px; width: 369px; height: 1000px; background: #fff; border: 1px solid #c8c8c8; padding-top: 1px; }
.mrow { height: 26px; display: flex; align-items: center; padding-left: 6px; white-space: nowrap; overflow: hidden; }
.fold { display: block; width: 24px; height: 22px; margin-left: 4px; background: linear-gradient(#8d8d8d 0, #8d8d8d 3px, #fff 3px, #fff 5px, #e8b765 5px); clip-path: polygon(0 0, 40% 0, 55% 15%, 100% 15%, 100% 100%, 0 100%); flex: none; }
.mseltext { background: #e1e1e1; padding: 0 3px; margin-left: 3px; height: 26px; }
.mrow .t { margin-left: 3px; padding-left: 3px; }

.right { flex: 1; min-width: 0; display: flex; flex-direction: column; background: #f0f0f0; padding-left: 6px; }
.tabstrip { height: 38px; background: #fff; border-bottom: 2px solid #b0b0b0; flex: none; }
.doc-tab { width: 224px; height: 31px; margin-top: 2px; background: #b8cfe9; display: flex; align-items: center; clip-path: polygon(32px 0, 100% 0, 100% 100%, 0 100%); padding-left: 37px; font-weight: 700; }
.doc-name { white-space: nowrap; font-size: 17.500px; color: #0c0c0c; }
.doc-x { margin-left: 10px; width: 26px; height: 26px; background: #c85050; color: #fff; text-align: center; font: 700 10px/24px "Liberation Mono", monospace; }
.canvas { flex: 1; position: relative; background-color: #fff; border-left: 2px solid #000; box-shadow: -3px -3px 0 #808890;
  background-image: radial-gradient(circle at .5px .5px, #111 .6px, transparent .7px); background-size: 17px 17px; background-position: 15px 3px; }
.ruler { height: 21px; border-bottom: 1px solid #000; display: flex; }
.z { font: 8px/20px "Liberation Mono", monospace; text-align: center; display: block; }
.z0 { width: 176px; border-right: 1px solid #000; }
.z1 { width: 177px; border-right: 1px solid #000; }
.vline { position: absolute; left: 56px; top: 0; bottom: 0; width: 1px; background: #808080; }

.menu { position: absolute; left: 480px; top: 54px; width: 258px; height: 569px; background: linear-gradient(90deg, #f7f7f7 0, #f7f7f7 28px, #f0f0f0 28px); border: 1px solid #999; box-shadow: 2px 2px 2px rgba(0,0,0,.35); padding: 1px 0; }
.mn { height: 30px; display: flex; align-items: center; padding-left: 31px; position: relative; white-space: nowrap; font-size: 18px; }
.mn small { font-size: 17.500px; color: #333; margin-left: 1px; }
.mn u { position: absolute; right: 7px; top: 9px; border-left: 7px solid #000; border-top: 6px solid transparent; border-bottom: 6px solid transparent; }
.msep { height: 8px; margin-left: 25px; position: relative; }
.msep::after { content: ""; position: absolute; left: 0; right: 2px; top: 3px; height: 1px; background: #d2d2d2; }
.mic { position: absolute; left: 5px; top: 6px; width: 17px; height: 17px; }
.hot { margin: 0 1px; padding-left: 29px; height: 30px; background: linear-gradient(#fdeedd 0, #fbdcae 45%, #fdc054 46%, #fdc660 80%, #fff0b8 100%); border: 1px solid #ffb800; }
.hic { position: absolute; left: 1px; top: 1px; width: 20px; height: 26px; background: #fde7c1; border: 1px solid #f3a73a; border-radius: 2px; display: flex; align-items: center; justify-content: center; }
.hic svg { width: 18px; height: 18px; display: block; }
.arrows { position: absolute; left: 0; top: 0; pointer-events: none; }
```
